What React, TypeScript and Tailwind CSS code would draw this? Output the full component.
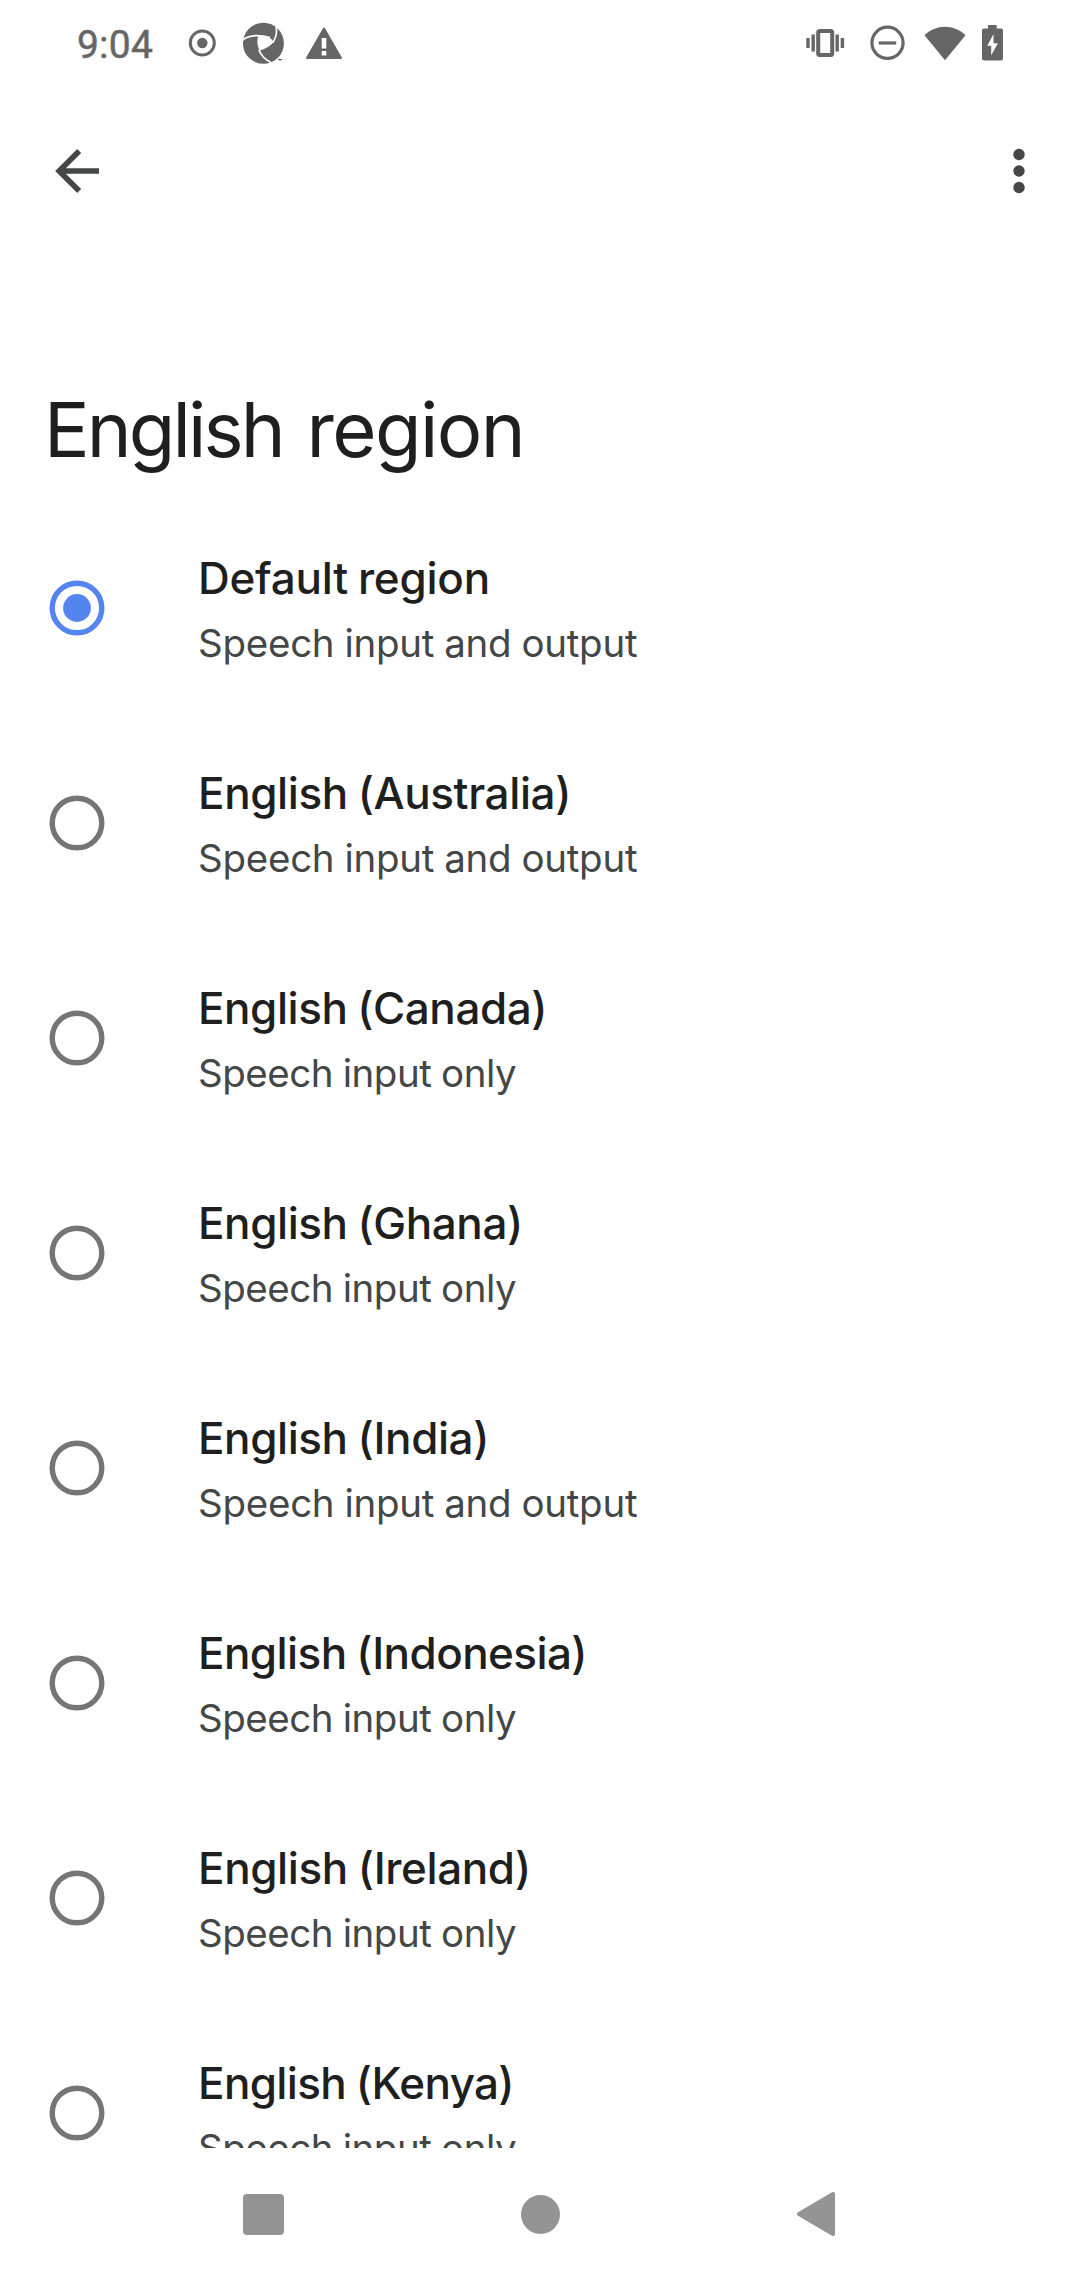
const regions = [
  { name: "Default region", output: true, tracking: "tracking-[-0.25px]" },
  { name: "English (Australia)", output: true, tracking: "tracking-[-0.4px]" },
  { name: "English (Canada)", output: false, tracking: "tracking-[-0.45px]" },
  { name: "English (Ghana)", output: false, tracking: "tracking-[-0.42px]" },
  { name: "English (India)", output: true, tracking: "tracking-[-0.42px]" },
  { name: "English (Indonesia)", output: false, tracking: "tracking-[-0.57px]" },
  { name: "English (Ireland)", output: false, tracking: "tracking-[-0.4px]" },
  { name: "English (Kenya)", output: false, tracking: "tracking-[-0.65px]" },
];

function StatusBar() {
  return (
    <header className="flex h-[86px] shrink-0 items-center pl-[77px] pr-[76px] text-[#666666]">
      <span className="w-[111px] pt-[3px] font-['Roboto',sans-serif] text-[39px] leading-[86px] tracking-[0.2px] [-webkit-text-stroke:0.5px_#666666]">9:04</span>
      <svg className="h-[30px] w-[30px]" viewBox="0 0 30 30" fill="none">
        <circle cx="14.3" cy="15" r="12" stroke="currentColor" strokeWidth="3" />
        <circle cx="14.3" cy="15" r="5.2" fill="currentColor" />
      </svg>
      <svg className="ml-6 h-[42px] w-[42px]" viewBox="0 0 42 42" fill="none">
        <circle cx="21.4" cy="21.3" r="20.5" fill="currentColor" />
        <path d="M16 14.6Q22.5 13.2 27 15.5Q31 17.5 31 20.5Q28 25 17.5 28.8Q14.2 21.5 16 14.6Z" fill="white" />
        <path d="M0 18.6Q9 10.5 28 15.5M34 4.8Q36 13 30.4 21M17 28Q20 36 29 40.5" stroke="white" strokeWidth="1.7" />
        <path d="M36 37.5h4M38 37.5v1.5" stroke="currentColor" strokeWidth="1" />
      </svg>
      <svg className="ml-[21px] h-[34px] w-[38px]" viewBox="0 0 38 34" fill="none">
        <path d="M19 2.5L36 32H2Z" fill="currentColor" stroke="currentColor" strokeWidth="2" strokeLinejoin="round" />
        <path d="M19 12v10.5M19 25v4.5" stroke="white" strokeWidth="4.6" />
      </svg>
      <svg className="ml-auto h-[30px] w-[40px]" viewBox="0 0 40 30" fill="none" stroke="currentColor" strokeWidth="3.4">
        <rect x="12.2" y="3" width="14" height="24" rx="1.5" strokeWidth="4" />
        <path d="M7.2 6.5v17M31.2 6.5v17M2 10v10M36.4 10v10" />
      </svg>
      <svg className="ml-6 h-[36px] w-[36px]" viewBox="0 0 36 36" fill="none" stroke="currentColor" strokeWidth="3.2">
        <circle cx="17.5" cy="17.8" r="15.6" />
        <path d="M8.8 18h17.4" />
      </svg>
      <svg className="ml-[17px] h-[36px] w-[44px]" viewBox="0 0 44 36">
        <path d="M1.5 10.3C13-1.2 31-1.2 42.5 10.3L22 35.2Z" fill="currentColor" />
      </svg>
      <svg className="ml-[15px] h-[36px] w-[22px]" viewBox="0 0 22 36">
        <path d="M6 0h8.7v3.5h4.3q2 0 2 2v28q0 2-2 2h-17q-2 0-2-2v-28q0-2 2-2h4Z" fill="currentColor" />
        <path d="M11.5 9v9.2h4.4L9.2 30.2v-9.5H5.3Z" fill="white" />
      </svg>
    </header>
  );
}

function AppBar() {
  return (
    <div className="flex h-[170px] shrink-0 items-start justify-between pt-[60px] pl-[54px] pr-[49px] text-[#444746]">
      <svg className="mt-0.5 h-[46px] w-[46px]" viewBox="0 0 46 46" fill="none" stroke="currentColor" strokeWidth="5.6">
        <path d="M25.2 2.9L5.1 23L25.2 43.1M5.5 23h39.5" />
      </svg>
      <svg className="h-[50px] w-[24px]" viewBox="0 0 24 50" fill="currentColor">
        <circle cx="12" cy="8.5" r="5.7" />
        <circle cx="12" cy="25" r="5.7" />
        <circle cx="12" cy="41.5" r="5.7" />
      </svg>
    </div>
  );
}

function Radio({ checked }: { checked: boolean }) {
  return (
    <svg className={checked ? "mt-20 h-14 w-14 text-[#5484ed]" : "mt-20 h-14 w-14 text-[#757575]"} viewBox="0 0 56 56" fill="none">
      <circle cx="28" cy="28" r="24.8" stroke="currentColor" strokeWidth="5.4" />
      {checked && <circle cx="28" cy="28" r="13.9" fill="currentColor" />}
    </svg>
  );
}

function NavBar() {
  return (
    <nav className="flex h-[132px] shrink-0 items-center justify-between pl-[243px] pr-[241px] text-[#949494]">
      <div className="h-[41px] w-[41px] rounded-[4px] bg-[#949494]" />
      <div className="h-[39px] w-[39px] rounded-full bg-[#949494]" />
      <svg className="h-[46px] w-[42px]" viewBox="0 0 42 46">
        <path d="M36 3V43L2 23Z" fill="currentColor" stroke="currentColor" strokeWidth="4" strokeLinejoin="round" />
      </svg>
    </nav>
  );
}

export default function App() {
  return (
    <div className="flex h-[2280px] w-[1080px] flex-col overflow-hidden bg-white font-['Inter',sans-serif]">
      <StatusBar />
      <AppBar />
      <h1 className="h-[244px] shrink-0 pt-[125px] pl-[44px] text-[76px] leading-[96px] tracking-[-1.6px] text-[#1f1f1f] [word-spacing:4px]">
        <span className="tracking-[-2.9px]">English</span> region
      </h1>
      <main className="h-[1648px] shrink-0 overflow-hidden">
        {regions.map((region, i) => (
          <div key={region.name} className="flex h-[215px] items-start pl-[49px]">
            <Radio checked={i === 0} />
            <div className="ml-[93px] pt-12 whitespace-nowrap">
              <div className={`text-[44px] leading-[60px] font-medium text-[#1f1f1f] [word-spacing:-1.5px] ${region.tracking}`}>{region.name}</div>
              {region.output ? (
                <div className="text-[38.5px] leading-[70px] tracking-[-0.26px] text-[#444746] [word-spacing:-0.5px]">Speech input and output</div>
              ) : (
                <div className="text-[38.5px] leading-[70px] tracking-[-0.5px] text-[#444746] [word-spacing:-0.5px]">Speech input only</div>
              )}
            </div>
          </div>
        ))}
      </main>
      <NavBar />
    </div>
  );
}
